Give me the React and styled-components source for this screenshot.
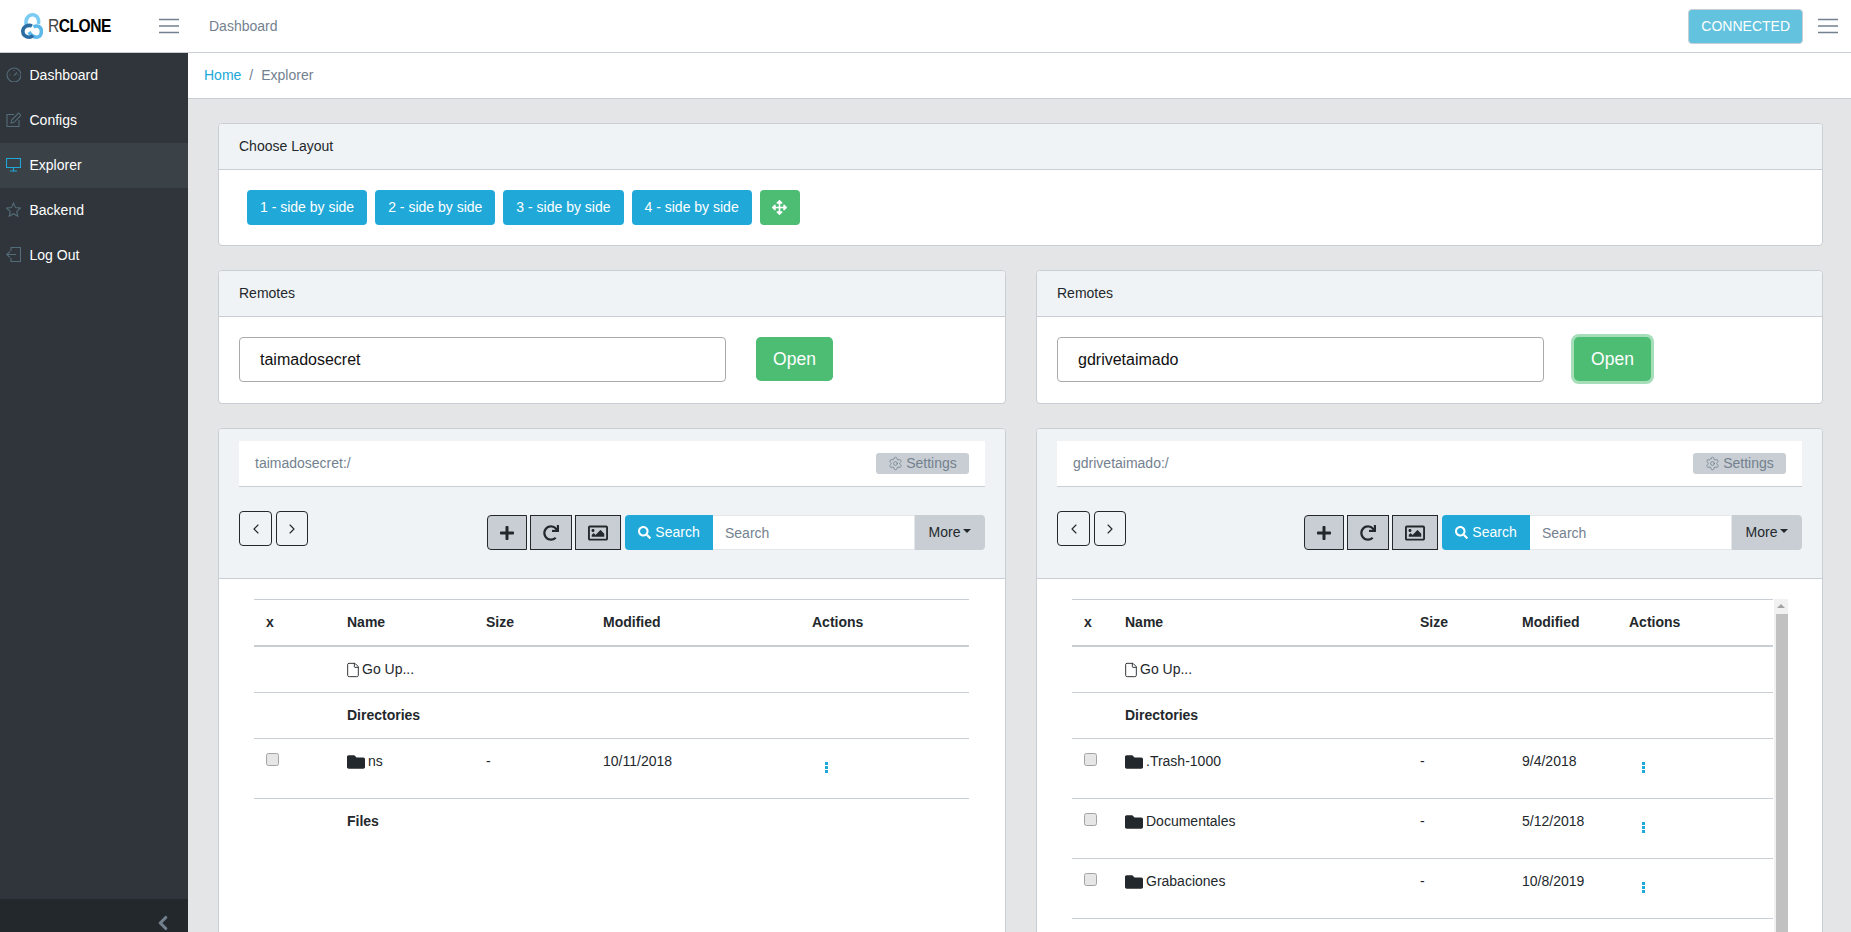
import React from 'react'
import styled, { createGlobalStyle } from 'styled-components'
import { FaFolder, FaPlus, FaRedo, FaRegImage, FaSearch, FaArrowsAlt } from 'react-icons/fa'
import { ChevronLeft, ChevronRight, File, Settings } from 'lucide-react'

const GlobalStyle = createGlobalStyle`
  html, body {
    margin: 0;
    height: 100%;
    overflow: hidden;
    background: #e4e5e6;
    color: #23282c;
    font-family: "Liberation Sans", Arial, sans-serif;
    font-size: 14px;
    line-height: 21px;
  }
  * { box-sizing: border-box; }
`

const Page = styled.div`
  height: 932px;
  display: flex;
  flex-direction: column;
  overflow: hidden;
`

const Header = styled.header`
  height: 53px;
  flex: none;
  display: flex;
  align-items: center;
  background: #fff;
  border-bottom: 1px solid #c8ced3;
`

const Brand = styled.div`
  width: 159px;
  padding-left: 21px;
  display: flex;
  align-items: center;
  gap: 5px;
`

const BrandText = styled.span`
  display: inline-block;
  font-size: 19px;
  letter-spacing: -0.6px;
  color: #000;
  font-weight: 700;
  line-height: 24px;
  transform: scaleX(0.82);
  transform-origin: left center;

  span {
    font-weight: 400;
    color: #444;
  }
`

const Burger = styled.svg`
  width: 20px;
  height: 16px;
  flex: none;
  display: block;
`

const HeaderTitle = styled.span`
  margin-left: 30px;
  color: #73818f;
`

const Connected = styled.button`
  margin-left: auto;
  margin-right: 15px;
  height: 35px;
  padding: 0 12px;
  border: 1px solid #c8ced3;
  border-radius: 4px;
  background: #63c2de;
  color: #fff;
  font: inherit;
`

const HeaderEnd = styled.div`
  margin-right: 13px;
`

const Body = styled.div`
  flex: 1;
  display: flex;
  min-height: 0;
`

const Sidebar = styled.nav`
  width: 188px;
  flex: none;
  display: flex;
  flex-direction: column;
  background: #2f353a;
`

const NavItem = styled.a`
  height: 45px;
  padding-left: 6px;
  display: flex;
  align-items: center;
  gap: 8.5px;
  color: #fff;
  background: ${p => (p.$active ? '#3a4248' : 'transparent')};
`

const NavIcon = styled.svg`
  width: 15px;
  height: 15px;
  flex: none;
  margin-top: -3px;
  fill: none;
  stroke: ${p => (p.$active ? '#20a8d8' : '#536c79')};
  stroke-width: 1.1;
`

const Minimizer = styled.div`
  margin-top: auto;
  height: 33px;
  background: #23282c;
  display: flex;
  justify-content: flex-end;
  align-items: center;
  padding: 14px 14px 0 0;
  overflow: hidden;
  color: #73818f;
`

const Main = styled.main`
  flex: 1;
  min-width: 0;
  overflow: hidden;
`

const Breadcrumb = styled.div`
  height: 46px;
  padding-left: 16px;
  display: flex;
  align-items: center;
  gap: 8px;
  background: #fff;
  border-bottom: 1px solid #c8ced3;
  color: #73818f;

  a { color: #20a8d8; }
`

const Content = styled.div`
  padding: 24px 28px 0 30px;
  display: flex;
  flex-direction: column;
  gap: 24px;
`

const Columns = styled.div`
  display: grid;
  grid-template-columns: 788px 787px;
  gap: 30px;
  align-items: start;
`

const Card = styled.section`
  background: #fff;
  border: 1px solid #c8ced3;
  border-radius: 4px;
`

const CardHeader = styled.div`
  height: 46px;
  padding: 0 20px;
  display: flex;
  align-items: center;
  background: #f0f3f5;
  border-bottom: 1px solid #c8ced3;
  border-radius: 3px 3px 0 0;
`

const LayoutBody = styled.div`
  padding: 20px 28px;
  display: flex;
  gap: 8px;
`

const SolidButton = styled.button`
  height: 35px;
  padding: 0 ${p => p.$px}px;
  border: 0;
  border-radius: 4px;
  background: ${p => p.$bg};
  color: #fff;
  font: inherit;
  display: flex;
  align-items: center;
`

const RemoteBody = styled.div`
  padding: 20px 0 21px 20px;
  display: flex;
  gap: 30px;
`

const RemoteInput = styled.div`
  width: ${p => p.$w}px;
  height: 45px;
  padding-left: 20px;
  display: flex;
  align-items: center;
  border: 1px solid #aaa;
  border-radius: 4px;
  color: #111;
  font-size: 16px;
`

const OpenButton = styled.button`
  width: 77px;
  height: 44px;
  border: 0;
  border-radius: 4.8px;
  background: #4dbd74;
  color: #fff;
  font: inherit;
  font-size: 17.5px;
  box-shadow: ${p => (p.$focus ? '0 0 0 3px rgba(77, 189, 116, 0.5)' : 'none')};
`

const ExplorerHeader = styled.div`
  height: 150px;
  padding: 12px 20px 0;
  background: #f0f3f5;
  border-bottom: 1px solid #c8ced3;
  border-radius: 3px 3px 0 0;
`

const PathBar = styled.div`
  height: 46px;
  padding: 0 16px;
  display: flex;
  align-items: center;
  justify-content: space-between;
  background: #fff;
  border-bottom: 1px solid #c8ced3;
  color: #73818f;
`

const SettingsButton = styled.span`
  width: 93px;
  height: 21px;
  display: flex;
  align-items: center;
  justify-content: center;
  gap: 3px;
  background: #c8ced3;
  border-radius: 3px;
  color: #73818f;
`

const Toolbar = styled.div`
  margin-top: 24px;
  display: flex;
  justify-content: space-between;
  align-items: flex-start;
`

const NavButtons = styled.div`
  display: flex;
  gap: 4px;
`

const OutlineButton = styled.button`
  width: ${p => p.$w}px;
  height: 35px;
  padding: 0;
  display: flex;
  align-items: center;
  justify-content: center;
  background: transparent;
  border: 1px solid #23282c;
  border-radius: 4px;
  color: #23282c;
`

const Tools = styled.div`
  margin-top: 4px;
  display: flex;
  align-items: stretch;
  height: 35px;
`

const ToolButton = styled.button`
  width: ${p => p.$w}px;
  margin-right: ${p => p.$gap}px;
  padding: 0;
  display: flex;
  align-items: center;
  justify-content: center;
  background: #c8ced3;
  border: 1px solid #23282c;
  border-radius: ${p => (p.$first ? '4px 0 0 4px' : '0')};
  color: #23282c;
`

const SearchAddon = styled.span`
  width: 88px;
  display: flex;
  align-items: center;
  justify-content: center;
  gap: 4px;
  background: #20a8d8;
  color: #fff;
  border-radius: 4px 0 0 4px;
`

const SearchInput = styled.div`
  width: 202px;
  padding: 2px 0 0 12px;
  display: flex;
  align-items: center;
  background: #fff;
  border: 1px solid #e4e7ea;
  border-left: 0;
  color: #73818f;
`

const MoreButton = styled.span`
  width: 70px;
  display: flex;
  align-items: center;
  justify-content: center;
  gap: 3px;
  background: #c8ced3;
  border-radius: 0 4px 4px 0;
`

const Caret = styled.i`
  width: 0;
  height: 0;
  margin-top: -3px;
  border-top: 4px solid #23282c;
  border-left: 4px solid transparent;
  border-right: 4px solid transparent;
`

const TableArea = styled.div`
  height: 760px;
  padding: 20px 36px 0 35px;
  display: flex;
  gap: ${p => (p.$scroll ? '1px' : '0')};
`

const Table = styled.table`
  flex: 1;
  width: 100%;
  height: 0;
  table-layout: fixed;
  border-collapse: separate;
  border-spacing: 0;
`

const Col = styled.col`
  width: ${p => p.$w}px;
`

const Th = styled.th`
  height: 48px;
  padding: 0 12px;
  text-align: left;
  font-weight: 700;
  border-top: 1px solid #c8ced3;
  border-bottom: 2px solid #c8ced3;
`

const Td = styled.td`
  height: ${p => p.$h || 46}px;
  padding: 12px 12px 0;
  vertical-align: top;
  border-top: ${p => (p.$first ? '0' : '1px solid #c8ced3')};
  font-weight: ${p => (p.$bold ? 700 : 400)};
`

const Check = styled.span`
  display: block;
  width: 13px;
  height: 13px;
  margin-top: 2px;
  background: #e6e6e6;
  border: 1px solid #a3a3a3;
  border-radius: 2.5px;
`

const FileName = styled.span`
  display: flex;
  align-items: center;
  gap: ${p => p.$gap}px;
  margin-left: ${p => p.$shift || 0}px;
`

const Dots = styled.svg`
  display: block;
  width: 3px;
  height: 11px;
  margin: 11px 0 0 13px;
  fill: #20a8d8;
`

const ScrollBar = styled.div`
  width: 14px;
  flex: none;
  display: flex;
  flex-direction: column;
  background: #f1f1f1;
`

const ScrollArrow = styled.div`
  height: 15px;
  display: flex;
  justify-content: center;
  padding-top: 5px;

  &::before {
    content: '';
    border: 4px solid transparent;
    border-top: 0;
    border-bottom: 4px solid #a3a3a3;
    height: 0;
  }
`

const ScrollThumb = styled.div`
  flex: 1;
  margin-left: 2px;
  background: #c1c1c1;
`

const BurgerIcon = () => (
  <Burger viewBox="0 0 20 16">
    <path d="M0 1.5h20M0 8h20M0 14.5h20" stroke="#73818f" strokeWidth="1.6" />
  </Burger>
)

const LogoIcon = () => (
  <svg width="22" height="26" viewBox="0 0 22 26" fill="none" strokeWidth="3.6">
    <path d="M5.5 13 C3.5 6 7.5 1.8 11.5 1.8 C16 1.8 18.5 6 17.5 11" stroke="#7accf3" />
    <path d="M8 19 C10 22.5 13 24.2 16 24.2 C19 24.2 20.4 21 20.4 18 C20.4 14 16.5 11.5 12.5 14" stroke="#5db9ea" />
    <path d="M11 13 C7 11 1.8 14 1.8 18.5 C1.8 22 5 24.2 8 24.2 C10 24.2 11 23.4 12 22.4" stroke="#2b6ca3" />
  </svg>
)

const navItems = [
  { label: 'Dashboard', icon: <><circle cx="8" cy="8" r="7" /><path d="M8 8.5l3-3M3.5 8h1M8 3v1M11.5 8h1" /></> },
  { label: 'Configs', icon: <><path d="M13 8v6.5H1v-12h7" /><path d="M5 11l.7-3L12.5 1 15 3.2 8 10.3z" /></> },
  { label: 'Explorer', active: true, icon: <><path d="M.5 1.5h14v9H.5zM7.5 10.5v3.5M4 14h7" /></> },
  { label: 'Backend', icon: <path d="M7.5 1l2 4.6 5 .5-3.8 3.3 1.1 4.9-4.3-2.6-4.3 2.6 1.1-4.9L.5 6.1l5-.5z" /> },
  { label: 'Log Out', icon: <><path d="M5 4V.5h9.5v14H5V11" /><path d="M10 7.5H.8M4 4.3L.8 7.5 4 10.7" /></> },
]

const layouts = ['1 - side by side', '2 - side by side', '3 - side by side', '4 - side by side']

const DirRow = ({ name, size, date }) => (
  <tr>
    <Td $h={60}><Check /></Td>
    <Td $h={60}>
      <FileName $gap={3}><FaFolder size={18} />{name}</FileName>
    </Td>
    <Td $h={60}>{size}</Td>
    <Td $h={60}>{date}</Td>
    <Td $h={60}>
      <Dots viewBox="0 0 3 11">
        <rect width="3" height="3" />
        <rect y="4" width="3" height="3" />
        <rect y="8" width="3" height="3" />
      </Dots>
    </Td>
  </tr>
)

const Explorer = ({ path, cols, dirs, scroll, filesLabel }) => (
  <Card>
    <ExplorerHeader>
      <PathBar>
        {path}
        <SettingsButton><Settings size={15} strokeWidth={1.3} />Settings</SettingsButton>
      </PathBar>
      <Toolbar>
        <NavButtons>
          <OutlineButton $w={33}><ChevronLeft size={16} strokeWidth={1.7} /></OutlineButton>
          <OutlineButton $w={32}><ChevronRight size={16} strokeWidth={1.7} /></OutlineButton>
        </NavButtons>
        <Tools>
          <ToolButton $w={40} $gap={3} $first><FaPlus size={16} /></ToolButton>
          <ToolButton $w={42} $gap={3}><FaRedo size={16} /></ToolButton>
          <ToolButton $w={46} $gap={4}><FaRegImage size={20} /></ToolButton>
          <SearchAddon><FaSearch size={13} />Search</SearchAddon>
          <SearchInput>Search</SearchInput>
          <MoreButton>More<Caret /></MoreButton>
        </Tools>
      </Toolbar>
    </ExplorerHeader>
    <TableArea $scroll={scroll}>
      <Table>
        <colgroup>
          {cols.map((w, i) => <Col key={i} $w={w} />)}
        </colgroup>
        <thead>
          <tr>
            <Th>x</Th>
            <Th>Name</Th>
            <Th>Size</Th>
            <Th>Modified</Th>
            <Th>Actions</Th>
          </tr>
        </thead>
        <tbody>
          <tr>
            <Td $first $h={45} />
            <Td $first $h={45}>
              <FileName $gap={1} $shift={-2}><File size={16} strokeWidth={1.4} />Go Up...</FileName>
            </Td>
            <Td $first $h={45} />
            <Td $first $h={45} />
            <Td $first $h={45} />
          </tr>
          <tr>
            <Td />
            <Td $bold colSpan={4}>Directories</Td>
          </tr>
          {dirs.map(d => <DirRow key={d.name} {...d} />)}
          <tr>
            <Td />
            <Td $bold colSpan={4}>{filesLabel}</Td>
          </tr>
        </tbody>
      </Table>
      {scroll && (
        <ScrollBar>
          <ScrollArrow />
          <ScrollThumb />
        </ScrollBar>
      )}
    </TableArea>
  </Card>
)

const Remote = ({ name, width, focus }) => (
  <Card>
    <CardHeader>Remotes</CardHeader>
    <RemoteBody>
      <RemoteInput $w={width}>{name}</RemoteInput>
      <OpenButton $focus={focus}>Open</OpenButton>
    </RemoteBody>
  </Card>
)

export default function App() {
  return (
    <Page>
      <GlobalStyle />
      <Header>
        <Brand>
          <LogoIcon />
          <BrandText><span>R</span>CLONE</BrandText>
        </Brand>
        <BurgerIcon />
        <HeaderTitle>Dashboard</HeaderTitle>
        <Connected>CONNECTED</Connected>
        <HeaderEnd><BurgerIcon /></HeaderEnd>
      </Header>
      <Body>
        <Sidebar>
          {navItems.map(item => (
            <NavItem key={item.label} $active={item.active}>
              <NavIcon viewBox="0 0 15 15" $active={item.active}>{item.icon}</NavIcon>
              {item.label}
            </NavItem>
          ))}
          <Minimizer><ChevronLeft size={22} strokeWidth={3.4} /></Minimizer>
        </Sidebar>
        <Main>
          <Breadcrumb>
            <a>Home</a>
            <span>/</span>
            <span>Explorer</span>
          </Breadcrumb>
          <Content>
            <Card>
              <CardHeader>Choose Layout</CardHeader>
              <LayoutBody>
                {layouts.map(l => <SolidButton key={l} $px={13} $bg="#20a8d8">{l}</SolidButton>)}
                <SolidButton $px={12.5} $bg="#4dbd74"><FaArrowsAlt size={15} /></SolidButton>
              </LayoutBody>
            </Card>
            <Columns>
              <Remote name="taimadosecret" width={487} />
              <Remote name="gdrivetaimado" width={487} focus />
            </Columns>
            <Columns>
              <Explorer
                path="taimadosecret:/"
                filesLabel="Files"
                cols={[81, 139, 117, 209, 169]}
                dirs={[{ name: 'ns', size: '-', date: '10/11/2018' }]}
              />
              <Explorer
                scroll
                path="gdrivetaimado:/"
                cols={[41, 295, 102, 107, 156]}
                dirs={[
                  { name: '.Trash-1000', size: '-', date: '9/4/2018' },
                  { name: 'Documentales', size: '-', date: '5/12/2018' },
                  { name: 'Grabaciones', size: '-', date: '10/8/2019' },
                ]}
              />
            </Columns>
          </Content>
        </Main>
      </Body>
    </Page>
  )
}
